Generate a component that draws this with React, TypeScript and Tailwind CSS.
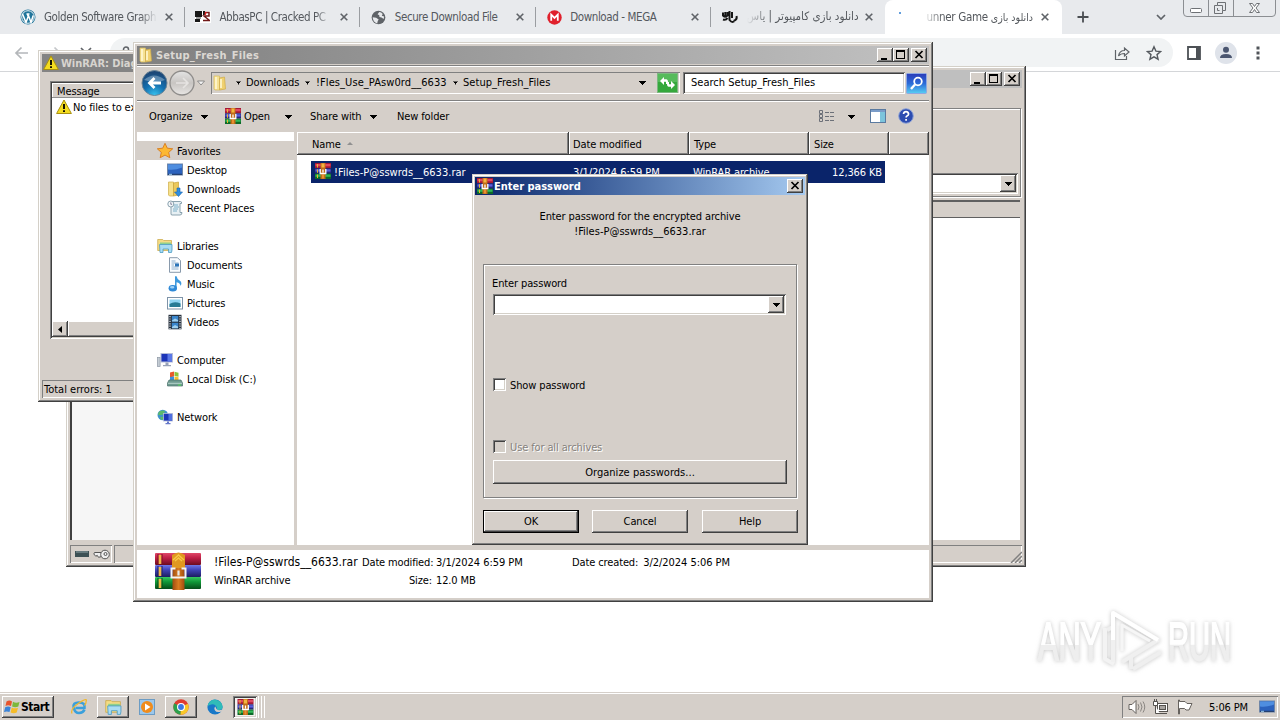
import React from "react";
import type { ReactNode } from "react";

const btn =
  "bg-[#d5cfc9] shadow-[inset_-1px_-1px_#404040,inset_1px_1px_#fff,inset_-2px_-2px_#808080]";
const sunken =
  "shadow-[inset_1px_1px_#808080,inset_-1px_-1px_#fff,inset_2px_2px_#404040,inset_-2px_-2px_#d4d0c8]";
const frame =
  "bg-[#d5cfc9] shadow-[inset_-1px_-1px_#404040,inset_1px_1px_#d4d0c8,inset_-2px_-2px_#808080,inset_2px_2px_#fff]";
const thin = "shadow-[inset_1px_1px_#808080,inset_-1px_-1px_#fff]";

function Down({ className = "" }: { className?: string }) {
  return (
    <svg viewBox="0 0 7 4" className={`h-1 w-[7px] shrink-0 ${className}`} shapeRendering="crispEdges">
      <path d="M0 0h7L3.5 4z" fill="#000" />
    </svg>
  );
}

function WinButtons() {
  return (
    <div className="flex">
      <div className={`h-[14px] w-4 ${btn}`}>
        <svg viewBox="0 0 16 14" className="h-[14px] w-4"><path d="M4 10h6v2H4z" /></svg>
      </div>
      <div className={`h-[14px] w-4 ${btn}`}>
        <svg viewBox="0 0 16 14" className="h-[14px] w-4" shapeRendering="crispEdges">
          <path d="M3 2h9v9H3zM4 4v6h7V4z" fillRule="evenodd" />
        </svg>
      </div>
      <CloseButton className="ml-[2px]" />
    </div>
  );
}

function CloseButton({ className = "" }: { className?: string }) {
  return (
    <div className={`h-[14px] w-4 ${btn} ${className}`}>
      <svg viewBox="0 0 16 14" className="h-[14px] w-4">
        <path d="M4.500 3l7 7M11.500 3l-7 7" stroke="#000" strokeWidth="1.700" />
      </svg>
    </div>
  );
}

function RarIcon({ className = "size-4" }: { className?: string }) {
  return (
    <svg viewBox="0 0 16 16" className={`shrink-0 ${className}`}>
      <rect width="16" height="5.300" y="0" fill="#a41834" />
      <rect width="15" height="2.300" x=".5" y="1" fill="#e04860" />
      <rect width="16" height="5.300" y="5.300" fill="#26287c" />
      <rect width="15" height="2.300" x=".5" y="6.300" fill="#5a60e0" />
      <rect width="16" height="5.400" y="10.600" fill="#0c6a28" />
      <rect width="15" height="2.300" x=".5" y="11.500" fill="#30b858" />
      <path d="M2.500 1v3.500M2.500 6.300v3.500M2.500 11.500v3.500" stroke="#e8b830" strokeWidth="1" />
      <rect x="5.500" width="5" height="16" fill="#c06c18" />
      <rect x="6.500" y=".5" width="3" height="4" fill="#f4b440" />
      <rect x="7" y="11.500" width="2" height="4" fill="#e89030" />
      <path d="M5.200 6v4.500h5.600V6M8 6.500v3" fill="none" stroke="#fff" strokeWidth="1.300" />
    </svg>
  );
}

function BigRar() {
  return (
    <svg viewBox="0 0 46 38" className="h-[38px] w-[46px] shrink-0">
      <defs>
        <linearGradient id="br" x2="0" y2="1"><stop offset="0" stopColor="#e04868" /><stop offset=".4" stopColor="#c02048" /><stop offset="1" stopColor="#6c0c20" /></linearGradient>
        <linearGradient id="bb" x2="0" y2="1"><stop offset="0" stopColor="#7078e8" /><stop offset=".4" stopColor="#4044b8" /><stop offset="1" stopColor="#1c1c60" /></linearGradient>
        <linearGradient id="bg" x2="0" y2="1"><stop offset="0" stopColor="#38c860" /><stop offset=".4" stopColor="#109838" /><stop offset="1" stopColor="#064c18" /></linearGradient>
        <linearGradient id="bs"><stop offset="0" stopColor="#a04c10" /><stop offset=".5" stopColor="#d87c20" /><stop offset="1" stopColor="#a04c10" /></linearGradient>
      </defs>
      <rect y="1" width="46" height="12" rx="1" fill="url(#br)" />
      <rect y="13" width="46" height="12" rx="1" fill="url(#bb)" />
      <rect y="25" width="46" height="12" rx="1" fill="url(#bg)" />
      <path d="M3 2v10M7 2v10" stroke="#7a1020" />
      <path d="M3 14v10M7 14v10" stroke="#1c1c60" />
      <path d="M3 26v10M7 26v10" stroke="#064c18" />
      <path d="M5 3v9M5 15v9M5 27v9" stroke="#f0b848" strokeWidth="2.600" />
      <path d="M17 3q6.500-5 13 0v13H17z" fill="#e09820" />
      <path d="M18 8l5.500-5L29 8M20 9l3.500-3L27 9" fill="none" stroke="#f8c848" strokeWidth="1.400" />
      <rect x="17.500" y="16" width="12" height="22" fill="url(#bs)" />
      <path d="M20.500 16.500h-4v9h14v-9h-4" fill="none" stroke="#f4f4f4" strokeWidth="2" />
      <path d="M23.500 18.500v5" stroke="#e8e8e8" strokeWidth="2.200" />
    </svg>
  );
}

function Warn({ className = "size-4" }: { className?: string }) {
  return (
    <svg viewBox="0 0 16 16" className={`shrink-0 ${className}`}>
      <path d="M8 1L15.400 14.500H.6z" fill="#f4dc20" stroke="#a89010" strokeWidth="1" strokeLinejoin="round" />
      <path d="M8 5v5M8 11.300v1.800" stroke="#181400" strokeWidth="2" />
    </svg>
  );
}

function Folder({ className = "" }: { className?: string }) {
  return (
    <svg viewBox="0 0 16 16" className={`size-4 shrink-0 ${className}`}>
      <path d="M2 1h5.500v14H3l-1-1z" fill="#f6e294" stroke="#d8bc60" strokeWidth=".7" />
      <path d="M7.500 3l5-1 1 12-6 1z" fill="#efd070" stroke="#d0ac48" strokeWidth=".7" />
      <path d="M4 2v12M9 4v9" stroke="#fff8d4" strokeWidth="1.600" />
    </svg>
  );
}

const nav: Record<string, ReactNode> = {
  star: <path d="M8 .3l2.300 4.900 5.400.6-4 3.600 1.100 5.300L8 12.100l-4.800 2.600 1.100-5.300-4-3.600 5.400-.6z" fill="#fcb832" stroke="#d8791c" strokeWidth=".9" />,
  desktop: (
    <>
      <rect x=".5" y="2" width="15" height="11" fill="#2c62bd" stroke="#6f86a8" />
      <path d="M1 2.500h14v3Q8 8.500 1 7.500z" fill="#4f8ee0" />
      <path d="M1 12.300h14" stroke="#1d3560" />
      <path d="M2 12.300h3" stroke="#9fd0f0" />
    </>
  ),
  downloads: (
    <>
      <path d="M1.500 1h5v14h-4l-1-1z" fill="#f6e08a" stroke="#cfae48" strokeWidth=".7" />
      <path d="M6.500 2l5-1v13l-5 1z" fill="#ecc95c" stroke="#c9a23a" strokeWidth=".7" />
      <path d="M10 7h3v4h2.500l-4 4.500-4-4.500H10z" fill="#2f8ee0" stroke="#1763ae" strokeWidth=".6" />
    </>
  ),
  recent: (
    <>
      <path d="M4 1.500h9.500q1.500 0 1 2h-1.500v9h2q0 2.500-2 2.500H5q-1.500 0-1-2z" fill="#e7f0f4" stroke="#7f98a6" strokeWidth=".9" />
      <circle cx="3.800" cy="4" r="3" fill="#f4f8fa" stroke="#7f98a6" strokeWidth=".9" />
      <path d="M3.800 2.300v2h1.300" stroke="#557" fill="none" strokeWidth=".7" />
      <path d="M7 5h4M7 7h5M6 9h5M6 11h4" stroke="#6fa8c4" strokeWidth=".9" />
    </>
  ),
  libraries: (
    <>
      <path d="M.7 1.500h5l1 1h7.800v10H.7z" fill="#f4dc84" stroke="#c8a544" strokeWidth=".7" />
      <path d="M3 4.500h11v6H3z" fill="#8fd08c" />
      <path d="M2.500 6.500H15V12l-.5 2.500h-3V11H6v3.500H3z" fill="#a8dcf4" stroke="#4d9cc4" strokeWidth=".8" />
    </>
  ),
  documents: (
    <>
      <path d="M2.500.7h8l3 3v11.600h-11z" fill="#fbfdff" stroke="#7c8fa3" strokeWidth=".9" />
      <path d="M4.500 4h4M4.500 6h7M4.500 8h2.500M4.500 10h7M4.500 12h7" stroke="#7fa6c8" strokeWidth=".9" />
      <rect x="8" y="6.500" width="4" height="3" fill="#2c74b8" />
    </>
  ),
  music: (
    <>
      <path d="M8 .3h1.600q.4 2.700 3 4.200 3 2 1 5.500-.3-3-4-3.800V13H8z" fill="#3e9ade" />
      <ellipse cx="5.800" cy="12.300" rx="4.200" ry="3.300" fill="#2f8ad8" />
      <ellipse cx="5.200" cy="11.300" rx="2.200" ry="1.200" fill="#9ed2f8" />
    </>
  ),
  pictures: (
    <>
      <rect x=".5" y="2.500" width="15" height="11.500" fill="#fff" stroke="#7e93a8" />
      <rect x="2.500" y="4.500" width="11" height="7.500" fill="#8fd4f2" />
      <path d="M2.500 9q5-3 11-.5V12h-11z" fill="#267a94" />
    </>
  ),
  videos: (
    <>
      <rect x="1.500" y=".8" width="13" height="14.500" fill="#26303c" />
      <path d="M3 2v13M13 2v13" stroke="#e8eef4" strokeWidth="1.200" strokeDasharray="1.200 1.200" />
      <path d="M4.800 2h6.500v5.500H4.800zM4.800 8.800h6.500v5.500H4.800z" fill="#3a86cc" />
      <path d="M5 6.500l3-2 3 1.500v1.500H5zM5 13l3-2 3 1.500v1.800H5z" fill="#9ed0f0" />
    </>
  ),
  computer: (
    <>
      <rect x=".5" y="5.500" width="2.600" height="9" fill="#c4ccd4" stroke="#8d98a4" strokeWidth=".7" />
      <rect x="4" y="1.500" width="11.500" height="8.500" fill="#1c34b8" stroke="#b4bcd8" />
      <path d="M10.500 2v7.500H15V2z" fill="#5a78e8" />
      <path d="M8.500 10.500h3V13h-3zM6 13h8v1.300H6z" fill="#98a2b8" />
    </>
  ),
  disk: (
    <>
      <path d="M3 1.500l4-1v5l-4 1z" fill="#e8592c" />
      <path d="M7.500.8l4 .9v4l-4-.6z" fill="#8cc43c" />
      <path d="M3 6l4-.6V9H3z" fill="#3b8fe0" />
      <path d="M7.500 5.500l4 .8V9h-4z" fill="#f6c030" />
      <path d="M2 9h12l1.500 3v3H.5v-3z" fill="#6f9a90" stroke="#47706a" strokeWidth=".7" />
      <path d="M1 12.300h14" stroke="#b7d4cc" />
      <path d="M11 14h3" stroke="#52e052" />
    </>
  ),
  network: (
    <>
      <circle cx="5.800" cy="6" r="5.300" fill="#3f93cc" />
      <path d="M3 2q3-1 5 0-1 4-4 4t-3 0q0-3 2-4zM3 8q3-1 4 1-1 3-3 1.500z" fill="#5cba6c" />
      <rect x="6.500" y="4.500" width="9" height="7.500" fill="#1c34b8" stroke="#b4bcd8" strokeWidth=".8" />
      <path d="M11.500 5v6.500h3.600V5z" fill="#5070e0" />
      <path d="M10 12.500h2V14h-2zM8.500 14h5v1.200h-5z" fill="#6678c8" />
    </>
  ),
};

const navRows: [number, string, string][] = [
  [0, "star", "Favorites"],
  [1, "desktop", "Desktop"],
  [1, "downloads", "Downloads"],
  [1, "recent", "Recent Places"],
  [-1, "", ""],
  [0, "libraries", "Libraries"],
  [1, "documents", "Documents"],
  [1, "music", "Music"],
  [1, "pictures", "Pictures"],
  [1, "videos", "Videos"],
  [-1, "", ""],
  [0, "computer", "Computer"],
  [1, "disk", "Local Disk (C:)"],
  [-1, "", ""],
  [0, "network", "Network"],
];

function TabX() {
  return (
    <svg viewBox="0 0 8 8" className="size-2 shrink-0">
      <path d="M.7.7l6.600 6.600M7.300.7L.7 7.300" stroke="#5f6368" strokeWidth="1.600" />
    </svg>
  );
}

function Tab({ icon, title, fade = false }: { icon: ReactNode; title: string; fade?: boolean }) {
  return (
    <div className="flex h-[34px] w-[175.400px] shrink-0 items-center pl-[10px]">
      <div className="flex size-4 items-center justify-center">{icon}</div>
      <div
        className={`ml-2 w-[113px] pt-[2px] text-[11.500px] tracking-[-0.400px] whitespace-nowrap ${fade ? "[mask-image:linear-gradient(to_right,#000_85%,transparent)]" : ""}`}
      >
        {title}
      </div>
      <div className="ml-[8px]"><TabX /></div>
      <div className="ml-[11px] h-5 w-px bg-[#9a9da1]" />
    </div>
  );
}

function Browser() {
  return (
    <div className="h-[692px] bg-white">
      <div className="flex h-[34px] bg-[#e8eaed] text-[#54585d]">
        <div className="flex w-[885px] shrink-0 pl-[10px]">
          <Tab
            fade
            title="Golden Software Graph"
            icon={
              <svg viewBox="0 0 16 16" className="size-4">
                <circle cx="8" cy="8" r="7.500" fill="#21759b" />
                <circle cx="8" cy="8" r="6.300" fill="none" stroke="#fff" strokeWidth=".9" />
                <path d="M2.500 5l3.500 8.500L8.200 7.500 7.300 5M6.500 5h3M8.300 6l2.700 7.500L13.200 6.500" fill="none" stroke="#fff" strokeWidth="1.500" />
              </svg>
            }
          />
          <Tab
            fade
            title="AbbasPC | Cracked PC"
            icon={
              <svg viewBox="0 0 16 12" className="h-3 w-4">
                <rect width="16" height="12" fill="#fff" />
                <path d="M0 0h7v6H0zM0 8h5v3H0zM8 0h2v4H8z" fill="#181818" />
                <path d="M9.500 1.500H14v3.500H9l5 4M8 9.500h7" stroke="#701818" strokeWidth="1.500" fill="none" />
                <path d="M11 1l-1 3" stroke="#e02020" strokeWidth="1.400" />
                <path d="M1 7h5" stroke="#333" />
              </svg>
            }
          />
          <Tab
            title="Secure Download File"
            icon={
              <svg viewBox="0 0 16 16" className="size-[15px]">
                <circle cx="8" cy="8" r="7.300" fill="#5f6368" />
                <path d="M1.800 7.800l3.700.4 2.700 2-1 1.500-.6 2.800Q2 13 1.800 7.800z" fill="#e8eaed" />
                <path d="M8.800 2.200L7 4.500l1.800 1 .2 2 2.200.5 2.300 1.500.5-2.500-2.500-1 1-1.800q-1.500-1.700-3.700-2z" fill="#e8eaed" />
              </svg>
            }
          />
          <Tab
            title="Download - MEGA"
            icon={
              <svg viewBox="0 0 16 16" className="size-[15px]">
                <circle cx="8" cy="8" r="7.700" fill="#e0202c" />
                <path d="M4.500 11.500V5L8 8.500 11.500 5v6.500" fill="none" stroke="#fff" strokeWidth="1.900" />
              </svg>
            }
          />
          <div className="flex h-[34px] w-[173px] items-center pl-[10px]">
            <svg viewBox="0 0 16 13" className="h-[13px] w-4">
              <path d="M1 1.500v3q2.500 2.500 4.500 0V1M3.300 1v4M7.500 0v9q3 4 6 0M10 1v6M14.500 5q1 4-3 5M1 8.500q3 1 4.500-1.500" fill="none" stroke="#161616" strokeWidth="2" />
            </svg>
            <div dir="rtl" className="ml-[9px] w-[112px] text-[11.500px] tracking-normal whitespace-nowrap [mask-image:linear-gradient(to_left,#000_80%,transparent)]">
              دانلود بازی کامپیوتر | یاس
            </div>
            <div className="ml-[6px]"><TabX /></div>
          </div>
        </div>
        <div className="flex w-[177px] items-start rounded-t-lg bg-white pt-px">
          <div className="mt-[11px] ml-[14px] size-[2px] rounded-full bg-[#2f7ed0]" />
          <div dir="rtl" className="mt-[7px] ml-[22px] w-[110px] text-[10.500px] leading-[18px] tracking-normal whitespace-nowrap [mask-image:linear-gradient(to_left,#000_82%,transparent)]">
            دانلود بازی <span dir="ltr" className="text-[11.500px] tracking-[-0.300px]">unner Game</span>
          </div>
          <div className="mt-[12px] ml-[8px]"><TabX /></div>
        </div>
        <svg viewBox="0 0 12 12" className="mt-[11px] ml-[15px] size-3"><path d="M6 .5v11M.5 6h11" stroke="#4a4e52" strokeWidth="1.800" /></svg>
        <svg viewBox="0 0 10 6" className="mt-[14px] ml-[67px] h-[6px] w-[10px]"><path d="M1 1l4 4 4-4" fill="none" stroke="#5f6368" strokeWidth="1.700" /></svg>
        <svg viewBox="0 0 94 18" className="ml-[17px] h-[18px] w-[94px]" fill="none" stroke="#8b8e92">
          <path d="M.5 0v13q0 3.500 3.500 3.500h85q3.500 0 3.500-3.500V0M25.500 0v16M50.500 0v16" />
          <rect x="7.500" y="8.500" width="11" height="4" rx="1" stroke="#6e7175" fill="#fff" />
          <path d="M34.500 2.500h8v8h-3v3h-8v-8h3zM34.500 5.500h5v5M34.500 8v2.500h2" stroke="#6e7175" />
          <path d="M66.500 3.500h3l2 3 2-3h3l-3.500 4.500 3.500 4.500h-3l-2-3-2 3h-3L70 8z" stroke="#6e7175" fill="#fff" />
        </svg>
      </div>
      <div className="flex h-[38px] items-center border-b border-[#d4d6d9] text-[#5f6368]">
        <svg viewBox="0 0 96 14" className="ml-[14px] h-[14px] w-24 shrink-0" fill="none" strokeWidth="1.700">
          <path d="M14 7H2M7.500 1.500L2 7l5.500 5.500" stroke="#b4b7ba" />
          <path d="M34 7h12M40.500 1.500L46 7l-5.500 5.500" stroke="#c4c7ca" />
          <path d="M67 2l10 10M77 2L67 12" stroke="#5f6368" />
        </svg>
        <div className="flex h-[29px] w-[1063px] shrink-0 items-center rounded-full bg-[#f1f3f4] px-[10px]">
          <svg viewBox="0 0 12 14" className="h-[14px] w-3" fill="none" stroke="#5f6368" strokeWidth="1.500"><rect x="2" y="6" width="8" height="7" /><path d="M3.500 6V3.500a2.500 2.500 0 015 0V6" /></svg>
          <svg viewBox="0 0 16 16" className="ml-[982px] size-4" fill="none" stroke="#5f6368" strokeWidth="1.200">
            <path d="M1.500 5v9.500h11V11M4.500 11q1-5.500 6-5.500V3l4.500 4-4.500 4V8.500q-4 0-6 2.500z" />
          </svg>
          <svg viewBox="0 0 16 16" className="ml-[16px] size-4" fill="none" stroke="#55595e" strokeWidth="1.400">
            <path d="M8 1.800l1.900 4.300 4.700.4-3.600 3.100 1.100 4.600L8 11.800l-4.100 2.400L5 9.600 1.400 6.500l4.700-.4z" />
          </svg>
        </div>
        <svg viewBox="0 0 14 14" className="ml-[14px] size-[14px]"><path d="M1 1h12v12H1z" fill="none" stroke="#4d5156" strokeWidth="1.800" /><path d="M9 1h4v12H9z" fill="#4d5156" /></svg>
        <svg viewBox="0 0 22 22" className="ml-[14px] size-[22px]"><circle cx="11" cy="11" r="11" fill="#dfe3ea" /><circle cx="11" cy="7.700" r="3" fill="#4b5670" /><path d="M5 16q0-4 6-4t6 4z" fill="#4b5670" /></svg>
        <svg viewBox="0 0 4 14" className="ml-[19px] h-[14px] w-1"><path d="M.5.5h3v3h-3zM.5 5.500h3v3h-3zM.5 10.500h3v3h-3z" fill="#505459" /></svg>
      </div>
    </div>
  );
}

function RearWindow() {
  return (
    <div className={`absolute top-[66px] left-[66px] flex h-[501px] w-[960px] flex-col p-1 ${frame}`}>
      <div className="flex h-[18px] items-center justify-end bg-[#bfbfbf] pr-[2px]">
        <WinButtons />
      </div>
      <div className="mt-[20px] mr-px flex h-[89px] items-end justify-end border border-[#808080] p-[2px] shadow-[inset_1px_1px_#fff,1px_1px_#fff]">
        <div className={`flex h-[21px] w-full items-center justify-end bg-white p-[2px] ${sunken}`}>
          <div className={`flex h-[17px] w-4 items-center justify-center ${btn}`}><Down /></div>
        </div>
      </div>
      <div className="mt-[3px] mr-[2px] flex h-[340px] flex-col border-t-2 border-[#606060]">
        <div className="h-4 border-b border-[#606060]" />
        <div className="flex flex-1 border-l-2 border-[#404040] bg-white">
          <div className="w-[200px] bg-[#f6f6f6]" />
        </div>
      </div>
      <div className="mt-[5px] flex h-[18px] gap-[2px]">
        <div className={`flex w-[42px] items-center gap-[4px] px-[5px] ${thin}`}>
          <svg viewBox="0 0 14 6" className="h-[6px] w-[14px] shrink-0"><rect width="14" height="6" fill="#3c5054" /><path d="M1 1h12" stroke="#90a4a8" /></svg>
          <svg viewBox="0 0 17 11" className="h-[11px] w-[17px] shrink-0"><path d="M8 3.500H1.500L.8 5l2 2.300 1.400-1 1.300 2L9 7.500" fill="#eee" stroke="#555" /><circle cx="12" cy="5.500" r="4.300" fill="#eee" stroke="#555" /><circle cx="12.500" cy="5" r="1.500" fill="none" stroke="#555" /></svg>
        </div>
        <div className={`flex flex-1 items-end justify-end ${thin}`}>
          <svg viewBox="0 0 12 12" className="size-3"><path d="M1 12L12 1M5 12l7-7M9 12l3-3" stroke="#808080" strokeWidth="1.500" /></svg>
        </div>
      </div>
    </div>
  );
}

function DiagWindow() {
  return (
    <div className={`absolute top-[50px] left-[38px] flex h-[352px] w-[300px] flex-col p-1 ${frame}`}>
      <div className="flex h-[18px] items-center bg-[#848484] pl-[1px] text-[11px] font-bold tracking-[-0.050px] text-[#d8d4cf]">
        <Warn />
        <span className="ml-[2px] pt-[2px] whitespace-nowrap">WinRAR: Diag</span>
      </div>
      <div className={`mt-[9px] ml-[8px] flex h-[258px] flex-col bg-white p-[2px] ${sunken}`}>
        <div className="h-[15px] border-b border-[#909090] bg-[#d5cfc9] pl-[5px] leading-[17px] shadow-[inset_1px_1px_#fff]">Message</div>
        <div className="flex h-[18px] items-center whitespace-nowrap pl-[4px]">
          <Warn />
          <span className="ml-px pt-[3px]">No files to extract</span>
        </div>
        <div className="flex-1" />
        <div className="flex h-4 bg-[#eae7e3]">
          <div className={`flex w-4 items-center justify-center ${btn}`}>
            <svg viewBox="0 0 4 7" className="h-[7px] w-1"><path d="M4 0v7L0 3.500z" /></svg>
          </div>
          <div className={`flex-1 ${btn}`} />
        </div>
      </div>
      <div className="flex-1" />
      <div className={`h-[18px] pl-[2px] leading-[20px] tracking-normal ${thin}`}>Total errors: 1</div>
    </div>
  );
}

function Explorer() {
  return (
    <div className={`absolute top-[42px] left-[133px] flex h-[560px] w-[800px] flex-col p-1 ${frame}`}>
      <div className="flex h-[18px] items-center bg-linear-to-r from-[#808080] to-[#c2c2c2] pr-[2px] pl-[1px] text-[11px] font-bold text-[#dcd8d3]">
        <Folder />
        <span className="ml-[2px] flex-1 pt-[2px] tracking-[0.220px]">Setup_Fresh_Files</span>
        <WinButtons />
      </div>
      <div className="mt-px flex h-[36px] items-center border-y border-[#808080] shadow-[inset_0_1px_#fff,0_1px_#fff]">
        <svg viewBox="0 0 68 28" className="ml-[4px] h-7 w-[68px] shrink-0">
          <defs>
            <radialGradient id="nb" cx=".5" cy="1" r=".9"><stop offset="0" stopColor="#38c4f0" /><stop offset=".5" stopColor="#1470b0" /><stop offset="1" stopColor="#1c4878" /></radialGradient>
            <linearGradient id="nf" x2="0" y2="1"><stop offset="0" stopColor="#e4e4e4" /><stop offset=".5" stopColor="#c8c5c2" /><stop offset="1" stopColor="#e8e6e4" /></linearGradient>
          </defs>
          <circle cx="13.500" cy="14" r="12.500" fill="url(#nb)" stroke="#6d8596" />
          <path d="M3 11q10-9 21 0-9 4-21 0z" fill="#fff" opacity=".3" />
          <path d="M20 14H9M13.500 9l-5 5 5 5" fill="none" stroke="#fff" strokeWidth="2.800" />
          <circle cx="41" cy="14" r="12" fill="url(#nf)" stroke="#8f8d8b" strokeWidth="1.300" />
          <path d="M35 14h11M42 9l5 5-5 5" fill="none" stroke="#e6e4e2" strokeWidth="1.600" />
          <path d="M56.500 12h7l-3.500 4z" fill="#f4f4f4" stroke="#777" strokeWidth=".8" />
        </svg>
        <div className={`ml-[2px] flex h-[22px] w-[469px] items-center ${thin}`}>
          <Folder className="ml-[1px]" />
          <Down className="ml-[7px] scale-80" />
          <span className="ml-[4px] w-[54px]">Downloads</span>
          <Down className="ml-[4px] scale-80" />
          <span className="ml-[5px] w-[131px] tracking-[0.080px] whitespace-nowrap">!Fles_Use_PAsw0rd__6633</span>
          <Down className="ml-[5px] scale-80" />
          <span className="ml-[4px] flex-1 tracking-[0.050px]">Setup_Fresh_Files</span>
          <Down className="mr-[11px]" />
          <svg viewBox="0 0 21 20" className="mr-[2px] h-5 w-[21px] shrink-0">
            <rect x=".5" y=".5" width="20" height="19" fill="#35a83c" stroke="#7cb880" />
            <path d="M1 1h19v8H1z" fill="#6cc870" opacity=".6" />
            <path d="M9 11V8.800H7V12L3 8l4-4v2.300h2.500q1.500.5 1.500 2.200V11zM12 9v2.200h2V8l4 4-4 4v-2.300h-2.500q-1.500-.5-1.500-2.200V9z" fill="#fff" />
          </svg>
        </div>
        <div className={`ml-[3px] flex h-[22px] w-[222px] items-center bg-white pl-[8px] tracking-[0.020px] ${sunken}`}>Search Setup_Fresh_Files</div>
        <svg viewBox="0 0 21 21" className="ml-px size-[21px] shrink-0">
          <defs><linearGradient id="sb" x2="0" y2="1"><stop offset="0" stopColor="#2c3cb8" /><stop offset=".5" stopColor="#2c6cd8" /><stop offset="1" stopColor="#58d0f4" /></linearGradient></defs>
          <rect x=".5" y=".5" width="20" height="20" rx="1" fill="url(#sb)" stroke="#8fa8e0" />
          <circle cx="12" cy="8.500" r="3.800" fill="none" stroke="#fff" strokeWidth="1.800" />
          <path d="M9 11.500l-4 4.500" stroke="#fff" strokeWidth="2.400" />
        </svg>
      </div>
      <div className="flex h-[31px] items-center">
        <span className="ml-[12px] w-[44px] pt-[2px]">Organize</span>
        <Down className="ml-[8px]" />
        <RarIcon className="mb-[2px] ml-[17px] size-4" />
        <span className="ml-[3px] w-[27px] pt-[2px]">Open</span>
        <Down className="ml-[14px]" />
        <span className="ml-[18px] w-[52px] pt-[2px] whitespace-nowrap">Share with</span>
        <Down className="ml-[8px]" />
        <span className="ml-[20px] flex-1 pt-[2px]">New folder</span>
        <svg viewBox="0 0 16 13" className="h-[13px] w-4" fill="none" stroke="#6c7078">
          <path d="M.5.500h3v3h-3zM.5 4.500h3v3h-3zM.5 8.500h3v3h-3z" />
          <path d="M6 2.500h10M6 6.500h10M6 10.500h10" strokeDasharray="4 1" />
        </svg>
        <Down className="ml-[13px]" />
        <svg viewBox="0 0 16 14" className="mb-[2px] ml-[15px] h-[14px] w-4"><rect x=".5" y=".5" width="15" height="13" fill="#fff" stroke="#5a7aa0" /><path d="M1 2h14" stroke="#7a9cc8" strokeWidth="2" /><path d="M10 3h5v10h-5z" fill="#7cc4dc" /></svg>
        <svg viewBox="0 0 16 16" className="mr-[15px] mb-[2px] ml-[12px] size-4">
          <circle cx="8" cy="8" r="7.300" fill="#2c4cb0" stroke="#8fa4d8" />
          <path d="M5.500 6q.3-2.300 2.500-2.300T10.600 6q0 1.300-1.600 2-.9.500-.9 1.600M8.100 11v1.700" fill="none" stroke="#fff" strokeWidth="1.700" />
        </svg>
      </div>
      <div className="flex h-[413px]">
        <div className="flex w-[157px] flex-col bg-white pt-[9px]">
          {navRows.map(([lvl, icon, label], i) => (
            <div
              key={i}
              className={`flex h-[19px] shrink-0 items-center ${i === 0 ? "bg-[#d5cfc9]" : ""} ${lvl === 1 ? "pl-[30px]" : "pl-[20px]"}`}
            >
              {lvl >= 0 && (
                <>
                  <svg viewBox="0 0 16 16" className="size-4 shrink-0">{nav[icon]}</svg>
                  <span className="ml-[4px] pt-[3px] whitespace-nowrap">{label}</span>
                </>
              )}
            </div>
          ))}
        </div>
        <div className="w-[3px]" />
        <div className="flex flex-1 flex-col bg-white">
          <div className="flex h-[23px] leading-[25px]">
            <div className={`flex w-[272px] items-center pl-[15px] ${btn}`}>
              <span className="pt-[2px]">Name</span>
              <svg viewBox="0 0 6 3" className="mb-px ml-[6px] h-[3px] w-[6px]"><path d="M0 3h6L3 0z" fill="#909090" /></svg>
            </div>
            <div className={`w-[120px] pl-[4px] ${btn}`}>Date modified</div>
            <div className={`w-[120px] pl-[5px] ${btn}`}>Type</div>
            <div className={`w-[80px] pl-[5px] ${btn}`}>Size</div>
            <div className={`flex-1 ${btn}`} />
          </div>
          <div className="mt-[6px] ml-[14px] flex h-[22px] w-[574px] bg-[#0a246a] leading-[23px] text-white">
            <RarIcon className="mt-[2px] ml-[4px] size-4" />
            <span className="ml-[3px] w-[239px] tracking-[0.020px]">!Files-P@sswrds__6633.rar</span>
            <span className="w-[120px] tracking-[-0.050px]">3/1/2024 6:59 PM</span>
            <span className="flex-1">WinRAR archive</span>
            <span className="mr-[3px]">12,366 KB</span>
          </div>
        </div>
      </div>
      <div className="mt-[5px] flex h-12 bg-white pl-[18px]">
        <div className="pt-[2px]"><BigRar /></div>
        <div className="ml-[13px] w-[148px] pt-[3px] leading-[18px] whitespace-nowrap">
          <div className="text-[12px] tracking-[0.020px]">!Files-P@sswrds__6633.rar</div>
          <div className="pt-px">WinRAR archive</div>
        </div>
        <div className="grid w-[210px] grid-cols-[70px_1fr] content-start gap-x-[4px] pt-[4px] leading-[18px] whitespace-nowrap">
          <div className="text-right tracking-[-0.150px]">Date modified:</div>
          <div className="tracking-[-0.050px]">3/1/2024 6:59 PM</div>
          <div className="text-right">Size:</div>
          <div>12.0 MB</div>
        </div>
        <div className="flex gap-[5px] pt-[4px] leading-[18px]">
          <span>Date created:</span>
          <span className="tracking-[-0.050px]">3/2/2024 5:06 PM</span>
        </div>
      </div>
    </div>
  );
}

function PasswordDialog() {
  return (
    <div className={`absolute top-[174px] left-[472px] flex h-[371px] w-[336px] flex-col p-[3px] ${frame}`}>
      <div className="flex h-[18px] items-center bg-linear-to-r from-[#0a246a] to-[#a6caf0] pr-[2px] pl-[2px] text-[11px] font-bold text-white">
        <RarIcon />
        <span className="ml-px flex-1 pt-[2px] tracking-[-0.020px]">Enter password</span>
        <CloseButton />
      </div>
      <div className="mt-[14px] text-center leading-[15px]">
        <div>Enter password for the encrypted archive</div>
        <div className="tracking-[0.020px]">!Files-P@sswrds__6633.rar</div>
      </div>
      <div className="mt-[25px] ml-[8px] flex h-[234px] w-[314px] flex-col border border-[#808080] px-[8px] shadow-[inset_1px_1px_#fff,1px_1px_#fff]">
        <div className="mt-[11px] leading-[15px]">Enter password</div>
        <div className={`mt-[3px] ml-px flex h-[21px] w-[293px] justify-end bg-white p-[2px] ${sunken}`}>
          <div className={`flex w-4 items-center justify-center ${btn}`}><Down /></div>
        </div>
        <div className="mt-[62px] flex h-[14px] items-center">
          <div className={`ml-px size-[13px] bg-white ${sunken}`} />
          <span className="ml-[4px] pt-[4px] leading-[14px]">Show password</span>
        </div>
        <div className="mt-[48px] flex h-[14px] items-center text-[#86827d]">
          <div className={`ml-px size-[13px] ${sunken}`} />
          <span className="ml-[4px] pt-[4px] leading-[14px] [text-shadow:1px_1px_#fff]">Use for all archives</span>
        </div>
        <div className={`mt-[7px] ml-px h-6 w-[294px] text-center leading-[25px] tracking-[0.030px] ${btn}`}>Organize passwords...</div>
      </div>
      <div className="mt-[12px] ml-[8px] flex gap-[13px] text-center">
        <div className="h-[23px] w-24 border border-black">
          <div className={`h-[21px] leading-[22px] ${btn}`}>OK</div>
        </div>
        <div className={`h-[23px] w-[96px] leading-[24px] ${btn}`}>Cancel</div>
        <div className={`ml-px h-[23px] w-[96px] leading-[24px] ${btn}`}>Help</div>
      </div>
    </div>
  );
}

function Watermark() {
  return (
    <svg viewBox="0 0 210 80" className="absolute top-[600px] left-[1030px] h-20 w-[210px]">
      <defs>
        <linearGradient id="wm" x2="0" y2="1"><stop offset=".55" stopColor="#fff" /><stop offset=".56" stopColor="#eeeeee" /></linearGradient>
        <filter id="ws" x="-10%" y="-10%" width="120%" height="130%"><feDropShadow dx="0" dy="0.300" stdDeviation="1.900" floodColor="#b0b0b0" floodOpacity=".75" /></filter>
      </defs>
      <g filter="url(#ws)" fontFamily="'Liberation Sans', sans-serif" fontSize="53" stroke="url(#wm)" strokeWidth="1.800">
        <text transform="translate(8 60) scale(.58 1)" fill="url(#wm)">ANY</text>
        <text transform="translate(138 60) scale(.55 1)" fill="url(#wm)">RUN</text>
        <g fill="none" strokeLinejoin="round" strokeWidth="4">
          <path d="M75 28v26l0 5 9 5" stroke="#f3f3f3" />
          <path d="M83 29v-2l-6 3M103 69l28-17M101 69v-12" stroke="#efefef" />
          <path d="M83 62V13l45 27-36 22" stroke="#f0f0f0" />
          <path d="M92 51V25l28 16" stroke="#f6f6f6" strokeWidth="3" />
          <path d="M83 40V13l45 27" stroke="#fff" />
        </g>
      </g>
    </svg>
  );
}

function TaskButton({ children, active = false }: { children: ReactNode; active?: boolean }) {
  return (
    <div className={`flex h-[22px] items-center justify-center ${active ? `w-[24px] bg-[#f2f0ee] ${sunken}` : `w-8 ${btn}`}`}>{children}</div>
  );
}

function Taskbar() {
  return (
    <div className="flex h-7 border-t border-[#d5cfc9] bg-[#d5cfc9] pt-[3px] pl-[2px] shadow-[inset_0_1px_#fff]">
      <div className={`flex h-[22px] w-[52px] items-center pl-[2px] text-[12px] font-bold ${btn}`}>
        <svg viewBox="0 0 16 16" className="size-[16px] shrink-0">
          <path d="M2.500 2.500q3-2 5.500 0L7 7q-3-1.500-5.500 0z" fill="#e8542c" />
          <path d="M9 2.800q3 1.700 6.500.2L14.300 7.500q-3 1.500-6.200 0z" fill="#7cb83c" />
          <path d="M1.200 8.200q3-1.500 5.500 0L5.500 13Q2.800 11.800 0 13z" fill="#3b84d8" />
          <path d="M7.800 8.500q3 1.600 6.200.2l-1.300 4.800q-3 1.500-6.100 0z" fill="#f6bc28" />
        </svg>
        <span className="ml-px tracking-[-0.500px]">Start</span>
      </div>
      <svg viewBox="0 0 16 16" className="mt-[3px] ml-[17px] size-4">
        <path d="M13.500 10.800Q12 14 8 14t-5.300-5.300T8 3.500t5.500 5.500H4.500" fill="none" stroke="#3aa0dc" strokeWidth="2.600" />
        <path d="M1 14.500Q-1 10 8 4t7-1.500q.5 1-1.500 4" fill="none" stroke="#f0b830" strokeWidth="1.300" />
      </svg>
      <div className="ml-[10px]">
        <TaskButton><svg viewBox="0 0 16 16" className="size-[17px]">{nav.libraries}</svg></TaskButton>
      </div>
      <svg viewBox="0 0 16 16" className="mt-[3px] ml-[10px] size-4">
        <rect x=".5" y=".5" width="15" height="15" fill="#9cc8ec" stroke="#6c9cc4" />
        <circle cx="8" cy="8" r="6" fill="#f08c1c" /><path d="M6 4.500v7L11.500 8z" fill="#fff" />
      </svg>
      <div className="ml-[10px]">
        <TaskButton>
          <svg viewBox="0 0 16 16" className="size-4">
            <circle cx="8" cy="8" r="7.700" fill="#e03c30" />
            <path d="M8 8L1.300 4.200A7.700 7.700 0 007.700 15.700z" fill="#2ca04c" />
            <path d="M8 8L7.500 15.700A7.700 7.700 0 0014.900 4.700z" fill="#f8c828" />
            <circle cx="8" cy="8" r="4" fill="#fff" /><circle cx="8" cy="8" r="2.900" fill="#3c78e4" />
          </svg>
        </TaskButton>
      </div>
      <svg viewBox="0 0 16 16" className="mt-[3px] ml-[10px] size-4">
        <circle cx="8" cy="8" r="7.600" fill="#1878c8" />
        <path d="M.5 7A7.600 7.600 0 0115.600 8q-.3 3-3.600 3-2.500 0-2-1.500T8 6 .5 7z" fill="#30bcb8" />
        <path d="M8.500 7.500q-2 1.500-.5 4t6.500 1l1-2q-4 1.500-5.500 0t-1.500-3z" fill="#d5cfc9" />
      </svg>
      <div className="ml-[10px] flex gap-px">
        <TaskButton active><RarIcon className="h-4 w-[17px]" /></TaskButton>
        <div className="h-[22px] w-px bg-white" />
        <div className="ml-px h-[22px] w-px bg-white" />
        <div className="ml-px h-[22px] w-px bg-white" />
      </div>
      <div className="flex-1" />
      <div className={`mr-[2px] flex h-[22px] w-[156px] items-center ${thin}`}>
        <svg viewBox="0 0 18 16" className="ml-[6px] h-4 w-[18px]" fill="none" stroke="#66625e">
          <path d="M1 5.500h3l4-4v13l-4-4H1z" fill="#fff" /><path d="M10 5q2 3 0 6M12.500 3.500q3 4.500 0 9M15 2.500q3.500 5.500 0 11" stroke="#8a8682" />
        </svg>
        <svg viewBox="0 0 18 16" className="ml-[6px] h-4 w-[18px]" fill="none" stroke="#55524e">
          <rect x="5.500" y="4.500" width="10" height="8" fill="#fff" /><rect x="7.500" y="6.500" width="6" height="4" fill="#a8a4a0" /><path d="M8 14.500h7" /><path d="M1.500 2.500h4v4h-4zM2.500 0v2M4.500 0v2M3.500 7v7.500H8" fill="#fff" />
        </svg>
        <svg viewBox="0 0 16 16" className="ml-[7px] h-4 w-4" stroke="#66625e" fill="#fff"><path d="M1.500 1v14h1V9.500h5L9 11h3l3-6.500h-5l-2-2H2.500V1z" /></svg>
        <span className="ml-[16px] w-[42px] pt-[2px] whitespace-nowrap">5:06 PM</span>
        <svg viewBox="0 0 16 16" className="ml-[8px] h-4 w-4 shrink-0">{nav.desktop}</svg>
      </div>
    </div>
  );
}

export default function App() {
  return (
    <div className="relative h-[720px] w-[1280px] overflow-hidden bg-white font-['DejaVu_Sans_Condensed','DejaVu_Sans',sans-serif] text-[11px] tracking-[-0.120px] text-black">
      <Browser />
      <RearWindow />
      <DiagWindow />
      <Explorer />
      <PasswordDialog />
      <Watermark />
      <Taskbar />
    </div>
  );
}
